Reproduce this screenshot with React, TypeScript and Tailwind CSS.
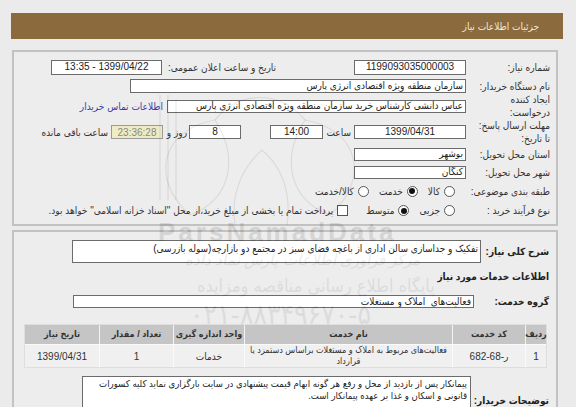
import React from "react";

const font = {
  fontFamily: "'Liberation Sans', 'DejaVu Sans Condensed', 'DejaVu Sans', sans-serif",
};

function Field({
  w,
  h = 15,
  children,
  align = "center",
}: {
  w: string;
  h?: number;
  children?: React.ReactNode;
  align?: "center" | "right";
}) {
  return (
    <div
      className={`${w} ${h === 15 ? "h-[15px]" : h === 14 ? "h-[14px]" : "h-[13px]"} shrink-0 bg-white border border-[#6b6b6b] flex items-center overflow-hidden whitespace-nowrap text-[10px] leading-none text-[#222] ${
        align === "center" ? "justify-center" : "justify-start pr-[2px]"
      }`}
    >
      {children}
    </div>
  );
}

function Radio({ on = false }: { on?: boolean }) {
  return (
    <span className="w-[11px] h-[11px] shrink-0 rounded-full border border-[#555] bg-white flex items-center justify-center">
      {on && <span className="w-[6px] h-[6px] rounded-full bg-[#111]" />}
    </span>
  );
}

export default function App() {
  return (
    <div
      dir="rtl"
      style={font}
      className="relative w-[576px] h-[407px] overflow-hidden bg-[#ebebeb] text-[#333] text-[10px] pt-[13px] whitespace-nowrap"
    >
      {/* header bar */}
      <div className="mr-[13px] ml-[11px] h-[26px] bg-[#8b6a3e] flex items-center pr-[24px] text-[10px] text-[#f2e9d8]">
        جزئیات اطلاعات نیاز
      </div>

      {/* panel 1 */}
      <div className="mt-[11px] mr-[18px] ml-[12px] border-2 border-[#c2c2c2] bg-[#ededed] pt-[7px] pb-[4px] pr-[6px]">
        <div className="flex items-center h-[16px]">
          <div className="w-[84px] shrink-0">شماره نیاز:</div>
          <Field w="w-[112px]" h={15}>1199093035000003</Field>
          <div className="w-[78px] shrink-0" />
          <div className="w-[114px] shrink-0">تاریخ و ساعت اعلان عمومی:</div>
          <Field w="w-[111px]" h={15}>1399/04/22 - 13:35</Field>
        </div>

        <div className="flex items-center h-[14px] mt-[4px]">
          <div className="w-[84px] shrink-0">نام دستگاه خریدار:</div>
          <Field w="w-[336px]" h={14} align="right">
            سازمان منطقه ویژه اقتصادی انرژی پارس
          </Field>
        </div>

        <div className="flex items-center h-[26px]">
          <div className="w-[84px] shrink-0 leading-[13px]">
            ایجاد کننده
            <br />
            درخواست:
          </div>
          <Field w="w-[299px]" h={13} align="right">
            عباس دانشی کارشناس خرید سازمان منطقه ویژه اقتصادی انرژی پارس
          </Field>
          <div className="mr-[4px] text-[#3b3ba6]">اطلاعات تماس خریدار</div>
        </div>

        <div className="flex items-center h-[26px]">
          <div className="w-[84px] shrink-0 leading-[13px]">
            مهلت ارسال پاسخ:
            <br />
            تا تاریخ:
          </div>
          <Field w="w-[112px]" h={14}>1399/04/31</Field>
          <div className="w-[31px] shrink-0 pr-[3px]">ساعت</div>
          <Field w="w-[53px]" h={14}>14:00</Field>
          <div className="w-[29px] shrink-0" />
          <Field w="w-[52px]" h={14}>8</Field>
          <div className="w-[26px] shrink-0 pr-[2px]">روز و</div>
          <div className="w-[52px] h-[14px] shrink-0 bg-[#eeecc6] border border-[#9a9a9a] flex items-center justify-center text-[10px] text-[#8a8a7a]">
            23:36:28
          </div>
          <div className="pr-[3px]">ساعت باقی مانده</div>
        </div>

        <div className="flex items-center h-[18px]">
          <div className="w-[84px] shrink-0">استان محل تحویل:</div>
          <Field w="w-[112px]" h={13} align="right">بوشهر</Field>
        </div>

        <div className="flex items-center h-[18px]">
          <div className="w-[84px] shrink-0">شهر محل تحویل:</div>
          <Field w="w-[112px]" h={13} align="right">کنگان</Field>
        </div>

        <div className="flex items-center h-[20px]">
          <div className="w-[95px] shrink-0">طبقه بندی موضوعی:</div>
          <Radio />
          <span className="mr-[4px] ml-[10px]">کالا</span>
          <Radio on />
          <span className="mr-[4px] ml-[10px]">خدمت</span>
          <Radio />
          <span className="mr-[4px]">کالا/خدمت</span>
        </div>

        <div className="flex items-center h-[19px]">
          <div className="w-[95px] shrink-0">نوع فرآیند خرید :</div>
          <Radio />
          <span className="mr-[4px] ml-[10px]">جزیی</span>
          <Radio on />
          <span className="mr-[4px] ml-[18px]">متوسط</span>
          <span className="w-[11px] h-[11px] shrink-0 border border-[#555] bg-white" />
          <span className="mr-[4px]">
            پرداخت تمام یا بخشی از مبلغ خرید،از محل "اسناد خزانه اسلامی" خواهد بود.
          </span>
        </div>
      </div>

      {/* panel 2 */}
      <div className="mt-[4px] mr-[18px] ml-[12px] h-[200px] border-2 border-[#c2c2c2] bg-[#ededed] pt-[8px] pr-[7px]">
        <div className="flex items-center h-[23px]">
          <div className="w-[68px] shrink-0 font-bold text-[10px] text-[#222]">شرح کلی نیاز:</div>
          <div className="w-[409px] h-[23px] shrink-0 bg-white border border-[#6b6b6b] pr-[2px] pt-[1px] text-[10px] leading-[13px] text-[#222] whitespace-normal">
            تفکیک و جداسازی سالن اداری از باغچه فضای سبز در مجتمع دو بازارچه(سوله بازرسی)
          </div>
        </div>

        <div className="h-[26px] flex items-center font-bold text-[10px] text-[#222]">
          اطلاعات خدمات مورد نیاز
        </div>

        <div className="flex items-center h-[13px] mt-[6px]">
          <div className="w-[75px] shrink-0 font-bold text-[10px] text-[#222]">گروه خدمت:</div>
          <Field w="w-[401px]" h={13} align="right">
            فعالیت‌های&nbsp; املاک و مستغلات
          </Field>
        </div>

        <div className="mt-[16px] mr-[2px] w-[523px] bg-[#dedede] p-px">
          <div className="flex h-[19px] bg-[#c5c5c5] font-bold text-[9px] text-[#333]">
            <div className="w-[21px] shrink-0 flex items-center justify-center border-l border-[#f4f4f4]">ردیف</div>
            <div className="w-[73px] shrink-0 flex items-center justify-center border-l border-[#f4f4f4]">کد خدمت</div>
            <div className="w-[208px] shrink-0 flex items-center justify-center border-l border-[#f4f4f4]">نام خدمت</div>
            <div className="w-[71px] shrink-0 flex items-center justify-center border-l border-[#f4f4f4]">واحد اندازه گیری</div>
            <div className="w-[74px] shrink-0 flex items-center justify-center border-l border-[#f4f4f4]">تعداد / مقدار</div>
            <div className="flex-1 flex items-center justify-center">تاریخ نیاز</div>
          </div>
          <div className="flex h-[23px] bg-[#f0f0f0] text-[10px] text-[#333] border-t border-[#fafafa]">
            <div className="w-[21px] shrink-0 flex items-center justify-center border-l border-[#fafafa]">1</div>
            <div dir="ltr" className="w-[73px] shrink-0 flex items-center justify-center border-l border-[#fafafa]">ر-68-682</div>
            <div className="w-[208px] shrink-0 flex items-center justify-center text-center text-[9px] leading-[11px] border-l border-[#fafafa] whitespace-normal">
              فعالیت‌های مربوط به املاک و مستغلات براساس دستمزد یا قرارداد
            </div>
            <div className="w-[71px] shrink-0 flex items-center justify-center border-l border-[#fafafa]">خدمات</div>
            <div className="w-[74px] shrink-0 flex items-center justify-center border-l border-[#fafafa]">1</div>
            <div className="flex-1 flex items-center justify-center">1399/04/31</div>
          </div>
        </div>

        <div className="flex items-center mt-[8px]">
          <div className="w-[78px] shrink-0 font-bold text-[10px] text-[#222] pt-[8px]">توضیحات خریدار:</div>
          <div className="w-[389px] h-[40px] shrink-0 bg-white border border-[#6b6b6b] pr-[3px] pt-[1px] text-[9.5px] leading-[12px] text-[#222] whitespace-normal">
            پیمانکار پس از بازدید از محل و رفع هر گونه ابهام قیمت پیشنهادی در سایت بارگزاری نماید کلیه کسورات قانونی و اسکان و غذا بر عهده پیمانکار است.
          </div>
        </div>
      </div>

      {/* watermark */}
      <div className="pointer-events-none absolute inset-0">
        <svg className="absolute left-0 top-0" width="576" height="407" viewBox="0 0 576 407" fill="none" stroke="#000" strokeOpacity="0.08" strokeWidth="1.2">
          <path d="M160 95 L160 200 M168 95 L168 200 M176 100 L176 200" />
          <path d="M190 215 C150 180 160 130 215 120 C240 160 230 200 190 215 Z" />
          <path d="M330 215 C370 180 360 130 305 120 C280 160 290 200 330 215 Z" />
          <path d="M215 120 C240 90 280 90 305 120" />
          <path d="M235 225 C230 190 245 165 262 150 C280 165 292 190 287 225" />
        </svg>
        <div dir="ltr" className="absolute left-[158px] top-[219px] text-[26px] font-black tracking-[3px] text-[#000] opacity-[0.1] leading-none">
          ParsNamadData
        </div>
        <div className="absolute left-[185px] top-[252px] text-[15px] italic text-[#000] opacity-[0.07] leading-none">
          مرکز فراوری اطلاعات پارس نماد داده
        </div>
        <div className="absolute left-[197px] top-[277px] text-[18px] text-[#000] opacity-[0.07] leading-none">
          پایگاه اطلاع رسانی مناقصه ومزایده
        </div>
        <div dir="ltr" className="absolute left-[190px] top-[301px] text-[28px] text-[#000] opacity-[0.07] leading-none">
          ۰۲۱-۸۸۳۴۹۶۷۰-۵
        </div>
      </div>
    </div>
  );
}
